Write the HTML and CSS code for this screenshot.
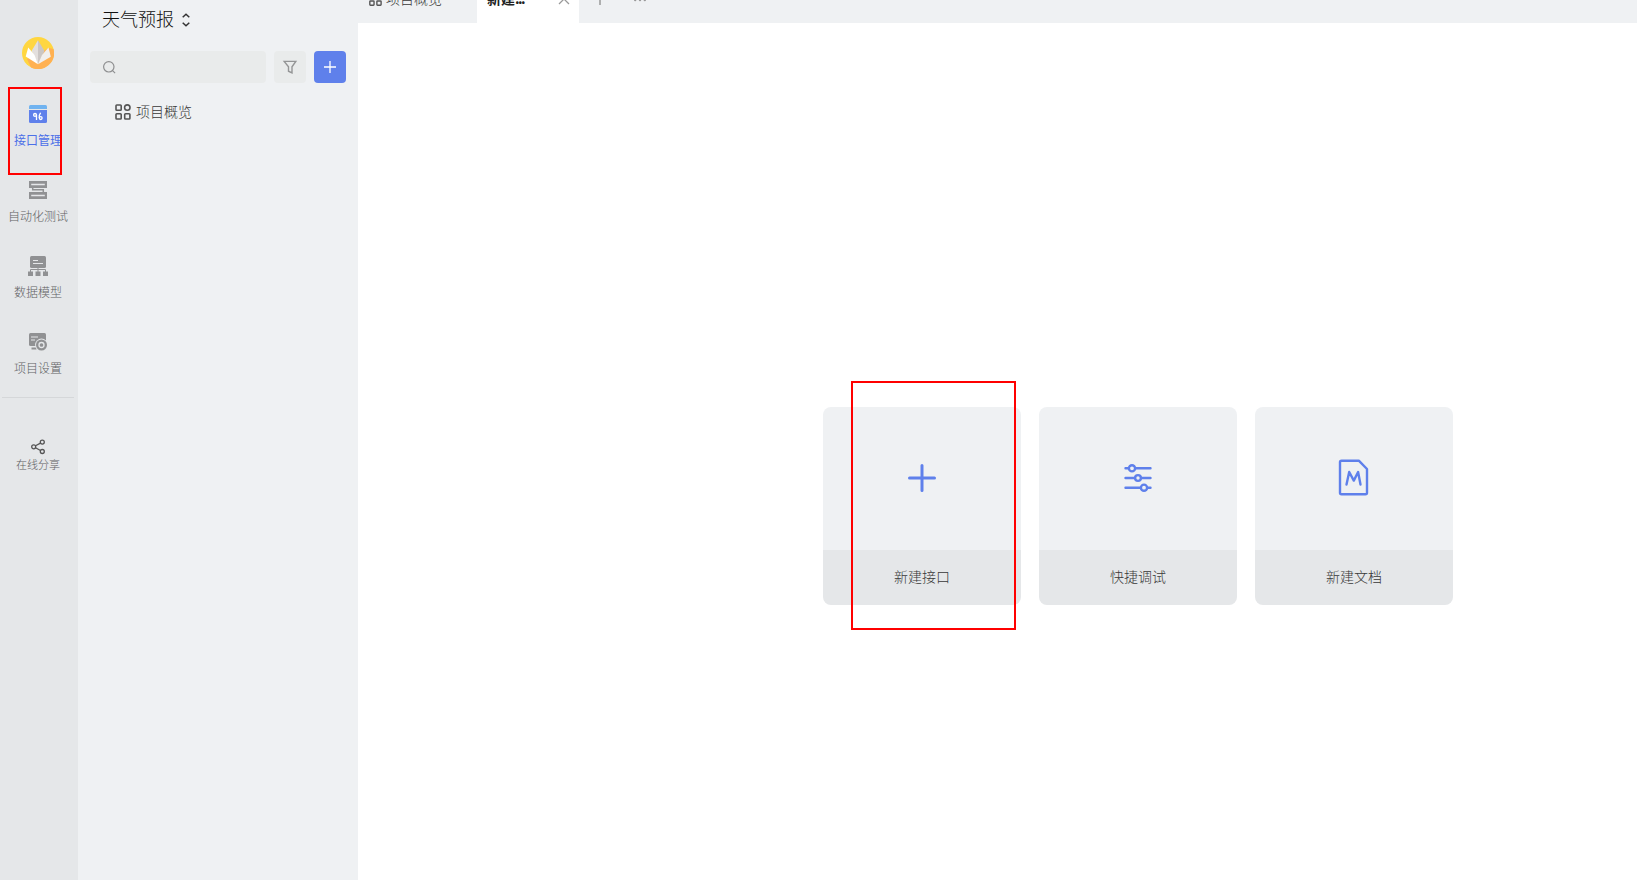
FILE: index.html
```html
<!DOCTYPE html>
<html lang="zh-CN">
<head>
<meta charset="utf-8">
<title>天气预报</title>
<link rel="stylesheet" href="styles.css">
</head>
<body>
<div class="app">
  <nav class="rail">
    <svg class="logo" viewBox="0 0 32 32">
      <circle cx="16" cy="16" r="16" fill="#ffd640"/>
      <path d="M5 22 27 11 31.500 12A16 16 0 0 1 9 30.400Z" fill="#ffb152"/>
      <path d="M16 3.300 9.500 14 16 27.300Z" fill="#e3dfdd"/>
      <path d="M16 3.300 22.500 14 16 27.300Z" fill="#cbc6c4"/>
      <path d="M6.200 10.500 12.500 18 16 27.300 3.700 19.500Z" fill="#fff"/>
      <path d="M26.500 10.500 20 18 16 27.300 28.800 19.800Z" fill="#f1efee"/>
    </svg>
    <a class="nav-item active">
      <svg class="nav-icon" viewBox="0 0 18 18"><path d="M0 4V1.500Q0 0 1.500 0h15Q18 0 18 1.500V4Z" fill="#70b3f0"/><path d="M0 5h18v11.500q0 1.500-1.500 1.500h-15Q0 18 0 16.500Z" fill="#5f80eb"/><g fill="none" stroke="#fff" stroke-width="1.300"><circle cx="6" cy="9.900" r="1.400"/><path d="M7.500 9.600V15M11.600 7.800 10.300 10.500V13"/><circle cx="11.700" cy="13.100" r="1.400"/></g></svg>
      <span>接口管理</span>
    </a>
    <a class="nav-item">
      <svg class="nav-icon" viewBox="0 0 18 18"><path d="M0 0h18v7H0ZM0 11h18v7H0Z" fill="#909193"/><path d="M2.200 3.500h13.600M2.200 14.500h13.600" stroke="#e5e7e9" stroke-width="1.300"/><path d="M3.700 7v1.700h10.600V11" fill="none" stroke="#909193" stroke-width="1.500"/></svg>
      <span>自动化测试</span>
    </a>
    <a class="nav-item">
      <svg class="nav-icon model" viewBox="0 0 20 20"><rect x="2" width="16" height="12" rx="1.500" fill="#909193"/><path d="M5 4.500h5M5 7.500h10" stroke="#e5e7e9" stroke-width="1.200"/><path d="M10 12v4M2.500 16v-2.500h15V16" fill="none" stroke="#909193"/><path d="M0 15.500h5V20H0ZM7.500 15.500h5V20h-5ZM15 15.500h5V20h-5Z" fill="#909193"/></svg>
      <span>数据模型</span>
    </a>
    <a class="nav-item">
      <svg class="nav-icon" viewBox="0 0 18 18"><rect width="17" height="13" rx="1.500" fill="#909193"/><path d="M2 4h7M2 7h4" stroke="#e5e7e9" stroke-width="1.200"/><path d="M2.500 15.500h5" stroke="#909193" stroke-width="2"/><circle cx="12.500" cy="12" r="6.400" fill="#e5e7e9"/><circle cx="12.500" cy="12" r="5.500" fill="#909193"/><circle cx="12.500" cy="12" r="2.500" fill="none" stroke="#e5e7e9" stroke-width="1.300"/></svg>
      <span>项目设置</span>
    </a>
    <div class="divider"></div>
    <a class="share">
      <svg class="share-icon" viewBox="0 0 14 15" fill="none" stroke="#555" stroke-width="1.300"><circle cx="2.700" cy="7.800" r="2"/><circle cx="11.300" cy="3.100" r="2"/><circle cx="11.300" cy="12.500" r="2"/><path d="m4.500 6.800 5-2.700M4.500 8.800l5 2.700"/></svg>
      <span>在线分享</span>
    </a>
  </nav>

  <aside class="sidebar">
    <div class="project">
      <span class="project-name">天气预报</span>
      <svg class="updown" viewBox="0 0 8 14" fill="none" stroke="#333" stroke-width="1.500"><path d="m.7 4.300 3.300-3 3.300 3M.7 9.700l3.300 3 3.300-3"/></svg>
    </div>
    <div class="tools">
      <div class="search"><svg class="search-icon" viewBox="0 0 14 14" fill="none" stroke="#8e8f90" stroke-width="1.200"><circle cx="6.800" cy="6.800" r="5.200"/><path d="m10.600 10.600 2.500 2.500"/></svg></div>
      <div class="tool"><svg class="filter-icon" viewBox="0 0 14 14" fill="none" stroke="#949596" stroke-width="1.400"><path d="M1.200 1.400h11.600L9 6.800v6L5.500 11.200V6.800Z"/></svg></div>
      <div class="tool add"><svg class="add-icon" viewBox="0 0 12 12" stroke="#fff" stroke-width="1.300"><path d="M6 0v12M0 6h12"/></svg></div>
    </div>
    <div class="overview">
      <svg class="grid-icon" viewBox="0 0 16 16" fill="none" stroke="#555" stroke-width="1.600"><rect x="1" y="1" width="5.200" height="5.200" rx=".8"/><circle cx="12.300" cy="3.600" r="2.700"/><rect x="1" y="9.800" width="5.200" height="5.200" rx=".8"/><rect x="9.700" y="9.800" width="5.200" height="5.200" rx=".8"/></svg>
      <span class="overview-name">项目概览</span>
    </div>
  </aside>

  <main class="main">
    <header class="tabs">
      <div class="tab">
        <svg class="tab-icon" viewBox="0 0 16 16" fill="none" stroke="#555" stroke-width="1.700"><rect x="1" y="1" width="5.200" height="5.200" rx=".8"/><circle cx="12.300" cy="3.600" r="2.700"/><rect x="1" y="9.800" width="5.200" height="5.200" rx=".8"/><rect x="9.700" y="9.800" width="5.200" height="5.200" rx=".8"/></svg>
        <span class="tab-name">项目概览</span>
      </div>
      <div class="tab current">
        <span class="tab-name">新建<span class="dots">...</span></span>
        <svg class="close" viewBox="0 0 10 10" stroke="#999" stroke-width="1.300"><path d="m0 0 10 10M10 0 0 10"/></svg>
      </div>
      <svg class="tab-add" viewBox="0 0 12 12" stroke="#999" stroke-width="1.500"><path d="M6 0v12M0 6h12"/></svg>
      <svg class="tab-more" viewBox="0 0 12 2" fill="#999"><circle cx="1.200" cy="1" r="1.200"/><circle cx="6" cy="1" r="1.200"/><circle cx="10.800" cy="1" r="1.200"/></svg>
    </header>
    <section class="cards">
      <div class="card">
        <div class="card-art"><svg class="art" viewBox="0 0 28 28" stroke="#5f80eb" stroke-width="3" stroke-linecap="round"><path d="M14 1.500v25M1.500 14h25"/></svg></div>
        <div class="card-label">新建接口</div>
      </div>
      <div class="card">
        <div class="card-art"><svg class="art" viewBox="0 0 28 28" fill="none" stroke="#5f80eb" stroke-width="2.400" stroke-linecap="round"><path d="M1.500 4.300h3M12 4.300h14.500M1.500 14h9M17.500 14h9M1.500 23.700h15M24 23.700h2.500"/><circle cx="8" cy="4.300" r="3.100"/><circle cx="14" cy="14" r="2.900"/><circle cx="20" cy="23.700" r="3.100"/></svg></div>
        <div class="card-label">快捷调试</div>
      </div>
      <div class="card">
        <div class="card-art"><svg class="art doc" viewBox="0 0 30 36" fill="none" stroke="#5f80eb" stroke-width="2.400" stroke-linejoin="round" stroke-linecap="round"><path d="M2.500.7h17.300l8.200 8.300v23.800q0 1.500-1.500 1.500h-24q-1.500 0-1.500-1.500V2.200Q1 .7 2.500.7Z"/><path d="m7.500 24.500 2.700-12.500 4.600 8.600 4.300-8.600L21.500 24.500"/></svg></div>
        <div class="card-label">新建文档</div>
      </div>
    </section>
  </main>
</div>
<div class="highlight highlight-nav"></div>
<div class="highlight highlight-card"></div>
</body>
</html>
```
FILE: styles.css
```css
* { box-sizing: border-box; }
body {
  margin: 0;
  overflow: hidden;
  color: #383838;
  font: 14px/20px "Noto Sans CJK SC", sans-serif;
  font-weight: 300;
}
svg { display: block; flex: none; overflow: visible; }
.app { display: flex; height: 880px; }

.rail {
  width: 78px;
  padding: 37px 2px 0 0;
  background: #e5e7e9;
  display: flex;
  flex-direction: column;
  align-items: center;
  flex: none;
}
.logo { width: 32px; height: 32px; margin-bottom: 36px; overflow: hidden; }
.nav-item {
  height: 76px;
  display: flex;
  flex-direction: column;
  align-items: center;
  gap: 7px;
  font-size: 12px;
  color: #606163;
  white-space: nowrap;
}
.nav-icon { width: 18px; height: 18px; }
.model { width: 20px; height: 20px; margin: -1px; }
.active { color: #4c70e8; font-weight: 400; }
.divider { width: 72px; height: 1px; margin-top: -12px; background: #d5d7d9; }
.share {
  margin-top: 41px;
  display: flex;
  flex-direction: column;
  align-items: center;
  gap: 1px;
  font-size: 11px;
  line-height: 18px;
  color: #606163;
}
.share-icon { width: 14px; height: 15px; }

.sidebar {
  width: 280px;
  padding: 6px 12px 0;
  background: #eff1f3;
  flex: none;
}
.project {
  height: 27px;
  padding-left: 12px;
  display: flex;
  align-items: center;
  gap: 8px;
  font-size: 18px;
  color: #111;
}
.project-name { padding-bottom: 3px; }
.updown { width: 8px; height: 14px; }
.tools { display: flex; gap: 8px; margin-top: 18px; }
.search, .tool {
  height: 32px;
  display: flex;
  align-items: center;
  border-radius: 4px;
  background: #e9ebeb;
}
.search { width: 176px; padding-left: 12px; }
.search-icon { width: 14px; height: 14px; }
.tool { width: 32px; justify-content: center; }
.filter-icon { width: 14px; height: 14px; }
.add { background: #5f80eb; }
.add-icon { width: 12px; height: 12px; }
.overview {
  height: 20px;
  margin-top: 19px;
  padding-left: 25px;
  display: flex;
  align-items: center;
  gap: 5px;
}
.overview-name { padding-bottom: 2px; }
.grid-icon { width: 16px; height: 16px; }

.main { flex: 1; background: #fff; }
.tabs {
  height: 23px;
  background: #eff1f3;
  display: flex;
  align-items: flex-end;
  overflow: hidden;
}
.tab { width: 119px; height: 48px; padding-left: 11px; display: flex; align-items: center; gap: 4px; }
.tab-name { padding-bottom: 2px; }
.tab-icon { width: 13px; height: 13px; }
.current {
  width: 102px;
  padding: 0 10px;
  justify-content: space-between;
  background: #fff;
  color: #222;
  font-weight: 700;
}
.dots { letter-spacing: -1.6px; }
.close { width: 10px; height: 10px; }
.tab-add { width: 12px; height: 12px; margin: 0 0 18px 15px; }
.tab-more { width: 12px; height: 2px; margin: 0 0 22px 28px; }

.cards { display: flex; gap: 18px; padding: 384px 0 0 465px; }
.card { width: 198px; height: 198px; border-radius: 8px; overflow: hidden; }
.card-art {
  height: 143px;
  padding-bottom: 1px;
  display: flex;
  align-items: center;
  justify-content: center;
  background: #eff1f3;
}
.art { width: 28px; height: 28px; }
.doc { width: 30px; height: 36px; }
.card-label { height: 55px; line-height: 52px; text-align: center; background: #e5e7e9; }

.highlight { position: absolute; border: 2px solid #f00; }
.highlight-nav { left: 8px; top: 87px; width: 54px; height: 88px; }
.highlight-card { left: 851px; top: 381px; width: 165px; height: 249px; }
```
